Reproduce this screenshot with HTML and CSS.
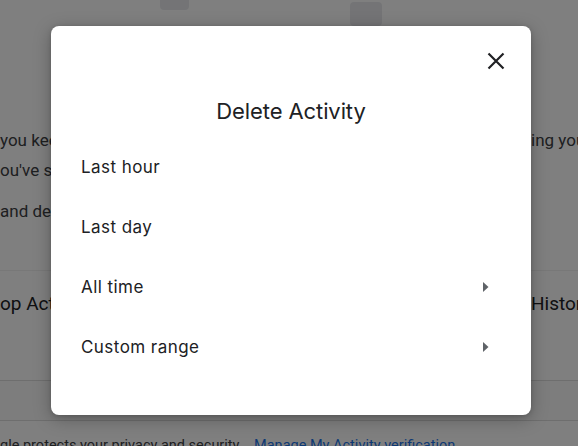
FILE: index.html
```html
<!DOCTYPE html>
<html>
<head>
<meta charset="utf-8">
<link rel="stylesheet" href="styles.css">
</head>
<body>
<div class="page">
  <div class="topbar">
    <span class="chip chip-a"></span>
    <span class="chip chip-b"></span>
  </div>
  <div class="intro">
    <div class="col-left">
      <p class="line l1">you keep</p>
      <p class="line l2">ou've seen</p>
      <p class="line l3">and delete</p>
    </div>
    <div class="col-right">
      <p class="line l1">ing your</p>
    </div>
  </div>
  <div class="controls">
    <span class="ctl">op Activity</span>
    <span class="ctl">History</span>
  </div>
  <div class="band"></div>
  <p class="footer">gle protects your privacy and security. <a class="link">Manage My Activity verification</a></p>
</div>

<div class="scrim"></div>

<div class="dialog" role="dialog">
  <div class="dlg-head">
    <button class="close" aria-label="Close">
      <svg width="18" height="18" viewBox="0 0 18 18"><path d="M1.5 1.5L16.5 16.5M16.5 1.5L1.5 16.5" stroke="#202124" stroke-width="2.2" fill="none"/></svg>
    </button>
  </div>
  <h2 class="title">Delete Activity</h2>
  <ul class="options">
    <li class="opt">Last hour</li>
    <li class="opt">Last day</li>
    <li class="opt">All time<svg class="arrow" width="24" height="24" viewBox="0 0 24 24"><path d="M10 7v10l5.5-5z" fill="#5f6368"/></svg></li>
    <li class="opt">Custom range<svg class="arrow" width="24" height="24" viewBox="0 0 24 24"><path d="M10 7v10l5.5-5z" fill="#5f6368"/></svg></li>
  </ul>
</div>
</body>
</html>
```

FILE: styles.css
```css
* { box-sizing: border-box; }
html, body { margin: 0; padding: 0; }
body {
  width: 578px;
  height: 446px;
  overflow: hidden;
  font-family: Roboto, "Liberation Sans", sans-serif;
  background: #ffffff;
  position: relative;
}
.page { width: 578px; }
.topbar {
  height: 40px;
  display: flex;
  align-items: flex-start;
}
.chip {
  display: block;
  background: #e8e9ed;
  border-radius: 4px;
}
.chip-a { width: 29px; height: 10px; margin-left: 160px; border-radius: 0 0 4px 4px; }
.chip-b { width: 32px; height: 24px; margin-left: 161px; margin-top: 2px; }

.intro {
  display: flex;
  justify-content: space-between;
  height: 231px;
  padding-top: 85px;
  border-bottom: 1px solid #f0f0f0;
}
.line {
  margin: 0;
  font-size: 17px;
  line-height: 30px;
  color: #3c4043;
  white-space: nowrap;
}
.col-left .l3 { margin-top: 11px; }
.col-right { width: 47px; overflow: hidden; }

.controls {
  display: flex;
  justify-content: space-between;
  height: 110px;
  padding-top: 19px;
  border-bottom: 1px solid #dcdcdc;
}
.ctl {
  font-size: 19px;
  line-height: 28px;
  color: #202124;
  white-space: nowrap;
}
.ctl + .ctl { width: 47px; overflow: hidden; }
.band {
  height: 40px;
  border-bottom: 1px solid #dcdcdc;
  background: #fafafa;
}
.footer {
  margin: 0;
  padding-top: 15px;
  font-size: 14.5px;
  line-height: 20px;
  color: #3c4043;
  white-space: nowrap;
}
.link { color: #1a73e8; margin-left: 8px; }

.scrim {
  position: absolute;
  inset: 0;
  background: rgba(0, 0, 0, 0.5);
}

.dialog {
  position: absolute;
  left: 51px;
  top: 26px;
  width: 480px;
  height: 389px;
  background: #ffffff;
  border-radius: 8px;
  box-shadow: 0 4px 18px rgba(0, 0, 0, 0.28), 0 1px 4px rgba(0, 0, 0, 0.15);
  display: flex;
  flex-direction: column;
  padding-bottom: 39px;
}
.dlg-head {
  display: flex;
  justify-content: flex-end;
  padding: 15px 15px 0;
}
.close {
  width: 40px;
  height: 40px;
  border: 0;
  background: transparent;
  padding: 0;
  display: flex;
  align-items: center;
  justify-content: center;
}
.title {
  margin: 15px 0 10px;
  text-align: center;
  font-family: Inter, "Open Sans", sans-serif;
  font-weight: 400;
  font-size: 22px;
  line-height: 30px;
  color: #202124;
  letter-spacing: -0.1px;
}
.options { list-style: none; margin: 0; padding: 0; }
.opt {
  height: 60px;
  display: flex;
  align-items: center;
  justify-content: space-between;
  padding: 1px 34px 0 30px;
  font-family: Inter, "Open Sans", sans-serif;
  font-size: 17px;
  letter-spacing: 0.45px;
  color: #202124;
}
.arrow { display: block; }
```
